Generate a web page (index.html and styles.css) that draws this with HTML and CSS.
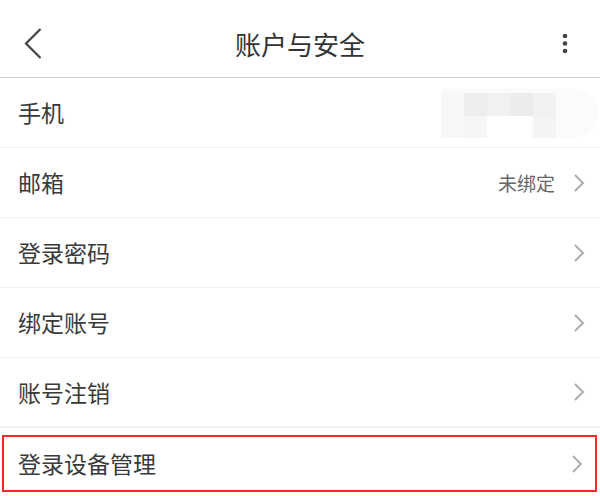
FILE: index.html
```html
<!DOCTYPE html>
<html lang="zh-CN">
<head>
<meta charset="utf-8">
<title>账户与安全</title>
<link rel="stylesheet" href="styles.css">
</head>
<body>
<header class="topbar">
  <div class="topbar-left">
    <svg class="back" width="18" height="31" viewBox="0 0 18 31"><polyline points="16.5,1 2,15.5 16.5,30" fill="none" stroke="#444" stroke-width="2.2" stroke-linejoin="miter"/></svg>
  </div>
  <h1 class="title">账户与安全</h1>
  <div class="topbar-right">
    <svg class="more" width="6" height="22" viewBox="0 0 6 22"><circle cx="3" cy="3" r="2.3" fill="#444"/><circle cx="3" cy="10.5" r="2.3" fill="#444"/><circle cx="3" cy="18" r="2.3" fill="#444"/></svg>
  </div>
</header>
<ul class="list">
  <li class="row">
    <span class="label">手机</span>
    <div class="blur">
      <span class="c c1"></span><span class="c c2"></span><span class="c c3"></span><span class="c c4"></span><span class="c c5"></span>
      <span class="c c6"></span><span class="c c7"></span><span class="c c8"></span><span class="c c9"></span><span class="c c10"></span>
    </div>
  </li>
  <li class="row">
    <span class="label">邮箱</span>
    <span class="value">未绑定</span>
    <svg class="chev" width="12" height="20" viewBox="0 0 12 20"><polyline points="2,2 10,10 2,18" fill="none" stroke="#aaa" stroke-width="1.8"/></svg>
  </li>
  <li class="row">
    <span class="label">登录密码</span>
    <svg class="chev" width="12" height="20" viewBox="0 0 12 20"><polyline points="2,2 10,10 2,18" fill="none" stroke="#aaa" stroke-width="1.8"/></svg>
  </li>
  <li class="row">
    <span class="label">绑定账号</span>
    <svg class="chev" width="12" height="20" viewBox="0 0 12 20"><polyline points="2,2 10,10 2,18" fill="none" stroke="#aaa" stroke-width="1.8"/></svg>
  </li>
  <li class="row row-last">
    <span class="label">账号注销</span>
    <svg class="chev" width="12" height="20" viewBox="0 0 12 20"><polyline points="2,2 10,10 2,18" fill="none" stroke="#aaa" stroke-width="1.8"/></svg>
  </li>
</ul>
<div class="highlight">
  <span class="label">登录设备管理</span>
  <svg class="chev" width="12" height="20" viewBox="0 0 12 20"><polyline points="2,2 10,10 2,18" fill="none" stroke="#aaa" stroke-width="1.8"/></svg>
</div>
</body>
</html>
```
FILE: styles.css
```css
* { box-sizing: border-box; }
html, body { margin: 0; padding: 0; background: #fff; }
body {
  width: 600px;
  height: 496px;
  overflow: hidden;
  font-family: "Noto Sans CJK SC", "Noto Sans", sans-serif;
  color: #3a3a3a;
}
.topbar {
  display: grid;
  grid-template-columns: 1fr auto 1fr;
  align-items: center;
  height: 78px;
  padding-top: 10px;
  border-bottom: 1px solid #cfcfcf;
}
.topbar-left { display: flex; padding-left: 24px; }
.topbar-right { display: flex; justify-content: flex-end; padding-right: 32px; }
.back, .more { display: block; }
.title {
  margin: 0;
  font-size: 26px;
  font-weight: 400;
  color: #333;
  line-height: 1;
  padding-left: 0;
}
.list { list-style: none; margin: 0; padding: 0; }
.row {
  display: flex;
  align-items: center;
  height: 70px;
  padding: 0 15px 0 18px;
  border-bottom: 1px solid #f0f0f0;
}
.row-last { border-bottom: 2px solid #f2f2f2; }
.label { flex: 1; font-size: 23px; line-height: 1; color: #3a3a3a; }
.value { font-size: 19px; line-height: 1; color: #666; margin-right: 18px; }
.chev { display: block; }
.blur {
  display: grid;
  grid-template-columns: repeat(5, 23px) 42px;
  grid-template-rows: 23px 22px;
  width: 157px;
  height: 50px;
  padding-top: 5px;
  margin-right: -13px;
  background: #fbfbfb;
  border-radius: 0 26px 26px 0;
  grid-auto-flow: row;
}
.c1 { background: #f7f7f7; grid-column: 1; grid-row: 1; }
.c2 { background: #eeeeee; grid-column: 2; grid-row: 1; }
.c3 { background: #f1f1f1; grid-column: 3; grid-row: 1; }
.c4 { background: #ececec; grid-column: 4; grid-row: 1; }
.c5 { background: #f1f1f1; grid-column: 5; grid-row: 1; }
.c6 { background: #f7f7f7; grid-column: 1; grid-row: 2; }
.c7 { background: #f6f6f6; grid-column: 2; grid-row: 2; }
.c8 { background: #ffffff; grid-column: 3; grid-row: 2; }
.c9 { background: #ffffff; grid-column: 4; grid-row: 2; }
.c10 { background: #f4f4f4; grid-column: 5; grid-row: 2; }
.highlight {
  display: flex;
  align-items: center;
  height: 57px;
  margin: 7px 3px 0 2px;
  padding: 0 12px 0 14px;
  border: 2px solid #f42a2a;
}
```
